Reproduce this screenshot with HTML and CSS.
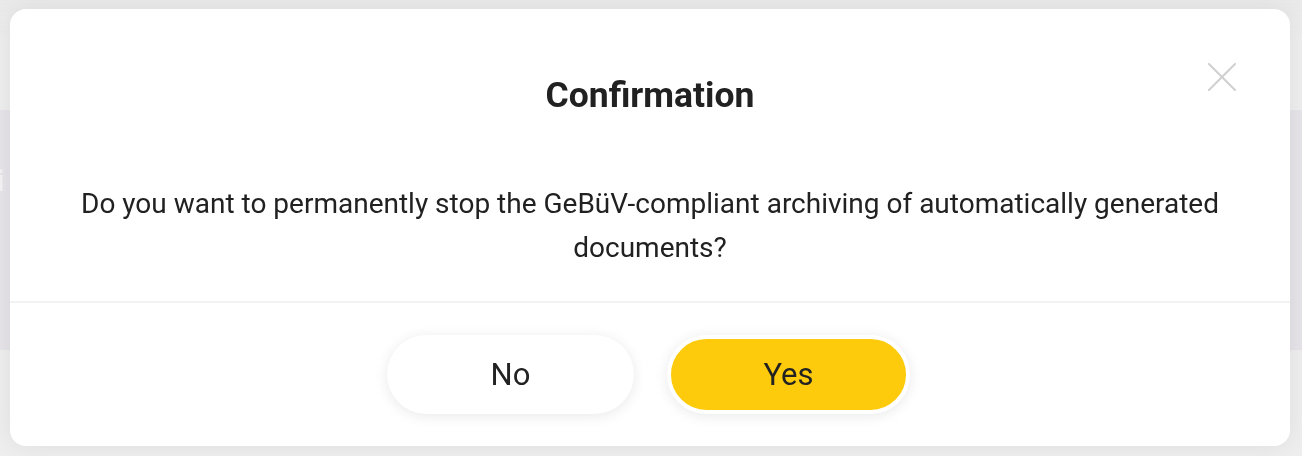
FILE: index.html
```html
<!DOCTYPE html>
<html lang="en">
<head>
<meta charset="utf-8">
<title>Confirmation</title>
<link rel="stylesheet" href="styles.css">
</head>
<body>
<div class="page">
  <div class="band"><span class="band-text">ti</span></div>
</div>
<div class="backdrop"></div>
<div class="modal" role="dialog" aria-labelledby="dlg-title">
  <header class="modal-header">
    <h2 class="modal-title" id="dlg-title">Confirmation</h2>
    <button class="close" aria-label="Close">
      <svg width="28" height="28" viewBox="0 0 28 28"><path d="M1 1 L27 27 M27 1 L1 27" stroke="#d0d0d0" stroke-width="2" fill="none" stroke-linecap="square"/></svg>
    </button>
  </header>
  <div class="modal-body">
    <p>Do you want to permanently stop the GeBüV-compliant archiving of automatically generated documents?</p>
  </div>
  <footer class="modal-footer">
    <button class="btn btn-no">No</button>
    <button class="btn btn-yes">Yes</button>
  </footer>
</div>
</body>
</html>
```

FILE: styles.css
```css
* { box-sizing: border-box; }
html, body { margin: 0; padding: 0; }
body {
  width: 1302px;
  height: 456px;
  overflow: hidden;
  background: #eeeeee;
  font-family: Roboto, "Liberation Sans", sans-serif;
}
.page {
  padding-top: 110px;
}
.band {
  height: 240px;
  background: #e6e4e9;
  padding-top: 56px;
  overflow: hidden;
}
.band-text {
  display: block;
  margin-left: -14px;
  font-size: 30px;
  line-height: 30px;
  color: #f3f2f5;
  font-weight: 700;
}
.backdrop {
  position: fixed;
  inset: 0;
  background: linear-gradient(to bottom, rgba(230,230,230,0.6) 0, rgba(240,240,240,0) 40px);
}
.modal {
  position: fixed;
  left: 10px;
  top: 9px;
  width: 1280px;
  height: 437px;
  background: #ffffff;
  border-radius: 16px;
  box-shadow: 0 0 24px rgba(0,0,0,0.07);
  display: flex;
  flex-direction: column;
}
.modal-header {
  position: relative;
  padding-top: 66px;
}
.modal-title {
  margin: 0;
  text-align: center;
  font-size: 35.5px;
  line-height: 40px;
  font-weight: 700;
  color: #212121;
}
.close {
  position: absolute;
  top: 54px;
  right: 54px;
  width: 28px;
  height: 28px;
  padding: 0;
  border: 0;
  background: none;
  cursor: pointer;
}
.close svg { display: block; }
.modal-body {
  padding: 67px 64px 31px;
  border-bottom: 2px solid #f2f2f2;
}
.modal-body p {
  margin: 0;
  text-align: center;
  font-size: 28px;
  line-height: 44px;
  color: #212121;
}
.modal-footer {
  display: flex;
  justify-content: center;
  gap: 33px;
  padding-top: 32px;
  padding-right: 3px;
}
.btn {
  height: 79px;
  border-radius: 40px;
  font-family: Roboto, "Liberation Sans", sans-serif;
  font-size: 31px;
  color: #222222;
  cursor: pointer;
  box-shadow: 0 2px 14px rgba(0,0,0,0.09);
}
.btn-no {
  width: 247px;
  background: #ffffff;
  border: 0;
}
.btn-yes {
  width: 243px;
  background: #fdcb0b;
  border: 4px solid #ffffff;
}
```
